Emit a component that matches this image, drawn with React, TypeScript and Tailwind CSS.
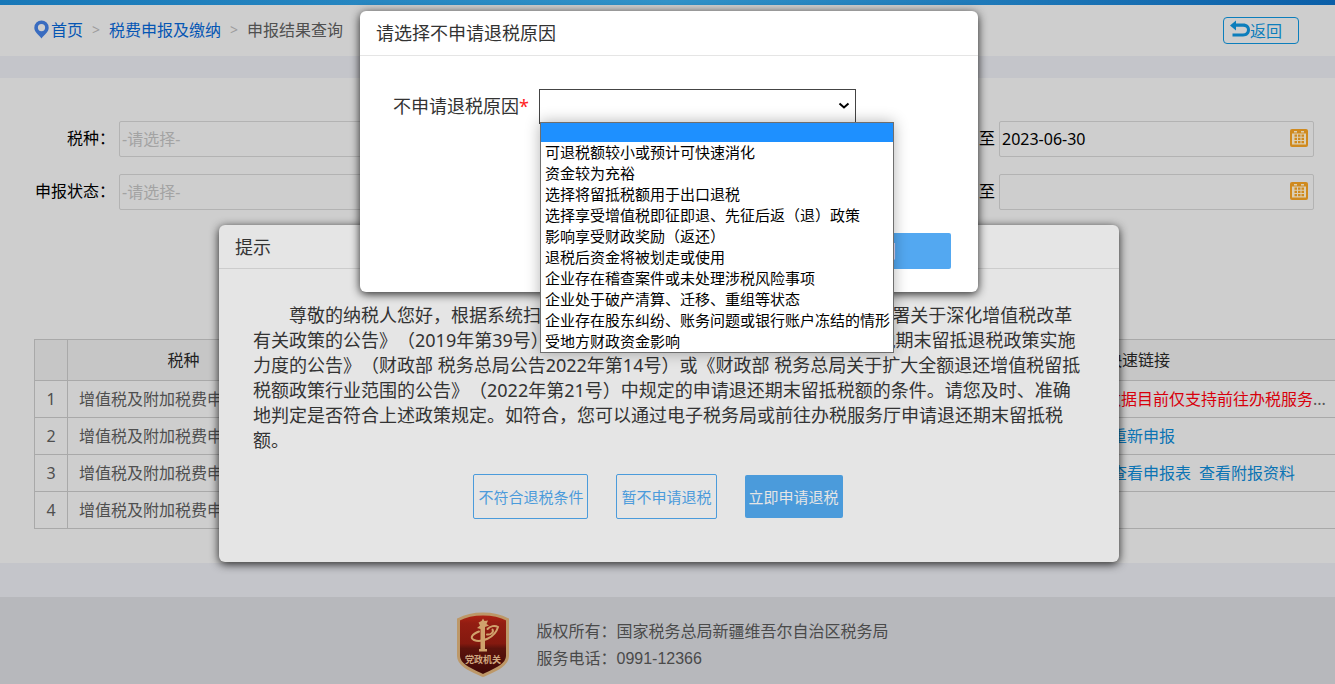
import * as React from "react"

const REASONS = [
  "可退税额较小或预计可快速消化",
  "资金较为充裕",
  "选择将留抵税额用于出口退税",
  "选择享受增值税即征即退、先征后返（退）政策",
  "影响享受财政奖励（返还）",
  "退税后资金将被划走或使用",
  "企业存在稽查案件或未处理涉税风险事项",
  "企业处于破产清算、迁移、重组等状态",
  "企业存在股东纠纷、账务问题或银行账户冻结的情形",
  "受地方财政资金影响",
]

function PinIcon() {
  return (
    <svg width="15" height="19" viewBox="0 0 15 19" aria-hidden="true">
      <path fill="#396cc0" fillRule="evenodd" d="M7.500 0.500A7.200 7.200 0 0 0 0.300 7.700C0.300 12 4.500 14.500 7.500 18.500C10.500 14.500 14.700 12 14.700 7.700A7.200 7.200 0 0 0 7.500 0.500ZM7.500 4A3.600 3.600 0 1 1 7.500 11.200A3.600 3.600 0 1 1 7.500 4Z" />
    </svg>
  )
}

function BackIcon() {
  return (
    <svg width="20" height="18" viewBox="0 0 20 18" className="mb-1" aria-hidden="true">
      <path fill="#0c7ebc" d="M0 5.500L6 0.500V3.500H13C17.500 3.500 20 6 20 9.800C20 13.800 17.500 16.500 13 16.500H2.500V13.500H13C15.600 13.500 17 12.200 17 9.800C17 7.700 15.600 6.700 13 6.700H6V10.500Z" />
    </svg>
  )
}

function CalendarIcon() {
  return (
    <svg width="18" height="18" viewBox="0 0 18 18" className="mb-[2px]" aria-hidden="true">
      <rect width="18" height="18" rx="2" fill="#d08a1e" />
      <path fill="#dccfb4" d="M4 2h3v1.500H4zM11 2h3v1.500h-3zM2 4.500h14v11H2z" />
      <path fill="#d08a1e" d="M4.500 5.500h2.500v2.300H4.500zM8 5.500h2.500v2.300H8zM11.500 5.500h2.500v2.300h-2.500zM4.500 8.800h2.500v2.300H4.500zM8 8.800h2.500v2.300H8zM11.500 8.800h2.500v2.300h-2.500zM4.500 12h2.500v2.300H4.500zM8 12h2.500v2.300H8zM11.500 12h2.500v2.300h-2.500z" />
    </svg>
  )
}

function BadgeIcon() {
  return (
    <svg width="54" height="66" viewBox="0 0 54 66" role="img" aria-label="党政机关">
      <defs>
        <linearGradient id="badge" x1="0" y1="0" x2="0" y2="1">
          <stop offset="0" stopColor="#b32414" />
          <stop offset="0.15" stopColor="#931d12" />
          <stop offset="0.48" stopColor="#84190f" />
          <stop offset="0.56" stopColor="#5c130c" />
          <stop offset="1" stopColor="#3c0806" />
        </linearGradient>
      </defs>
      <path fill="url(#badge)" stroke="#bd9868" strokeWidth="3" d="M27 2C36 2 45 4 51.500 7.500V44C51.500 53 39 58 27 63.500C15 58 2.500 53 2.500 44V7.500C9 4 18 2 27 2Z" />
      <path fill="#d0a26c" d="M25.500 9L27 6.500L28.500 9L32 8.500L30.500 12L33 13.500L29 15V37H31V39.500H23V37H24.500V17L21 16L24 13.500L22.500 10.500Z" />
      <path fill="none" stroke="#d0a26c" strokeWidth="2" strokeLinecap="round" d="M23 19.500C16 22 13.500 26 18 28C25 31 39 26 42 15C39 13 34 14 31.500 17M31 22.500C35 23 38 20 36.500 17.500" />
      <text x="27" y="51" textAnchor="middle" fontSize="9" fontWeight="700" fill="#d0a780">党政机关</text>
    </svg>
  )
}

function DateField({ id, value }: { id: string; value: string }) {
  return (
    <div className="flex items-center gap-1">
      <label htmlFor={id} className="pb-[2px]">至</label>
      <div className="flex h-9 w-[315px] items-center rounded-xs border border-[#b3b3b3] pr-[5px] pl-[2px]">
        <input id={id} defaultValue={value} className="min-w-0 flex-1 bg-transparent outline-none" />
        <button type="button" aria-label="选择日期">
          <CalendarIcon />
        </button>
      </div>
    </div>
  )
}

function FilterRow({ id, label, date }: { id: string; label: string; date: string }) {
  return (
    <div className="flex items-center justify-between">
      <div className="flex items-center">
        <label htmlFor={id} className="w-[115px] pb-[2px] text-right">
          {label}：
        </label>
        <input
          id={id}
          placeholder="-请选择-"
          className="ml-1 h-9 w-[316px] rounded-xs border border-[#b3b3b3] bg-transparent pl-[2px] outline-none placeholder:text-[#a3a3a3]"
        />
      </div>
      <DateField id={id + "-end"} value={date} />
    </div>
  )
}

function ResultTable() {
  const links = [
    <span className="text-[#d8000c]">数据目前仅支持前往办税服务<span className="text-[#555555]">...</span></span>,
    <a href="#redo" className="pl-[6px] text-[#0c74b4]">重新申报</a>,
    <span className="flex gap-2 pl-[6px] text-[#0c74b4]">
      <a href="#report">查看申报表</a>
      <a href="#attach">查看附报资料</a>
    </span>,
    null,
  ]

  return (
    <table className="w-full table-fixed border-collapse border-y border-l border-[#a9a9a9] whitespace-nowrap text-[#4f4f4f]">
      <thead className="bg-[#c6c6c6] text-[#222222]">
        <tr className="h-[41px] border-b border-[#a9a9a9]">
          <th className="w-[33px] border-r border-[#a9a9a9]" />
          <th className="w-[232px] border-r border-[#a9a9a9] font-normal">税种</th>
          <th />
          <th className="w-[236px] pl-[7px] text-left font-normal">快速链接</th>
        </tr>
      </thead>
      <tbody>
        {links.map((link, i) => (
          <tr key={i} className="h-[37px] border-b border-[#a9a9a9]">
            <td className="border-r border-[#a9a9a9] text-center">{i + 1}</td>
            <td className="overflow-hidden border-r border-[#a9a9a9] pl-[11px]">增值税及附加税费申报</td>
            <td />
            <td className="pl-[6px]">{link}</td>
          </tr>
        ))}
      </tbody>
    </table>
  )
}

function NoticeDialog() {
  return (
    <div
      role="dialog"
      aria-label="提示"
      className="absolute top-[225px] left-[219px] w-[900px] rounded-md bg-[#e5e5e5] pb-[43px] text-[#333333] shadow-[0_2px_10px_rgba(0,0,0,0.85)]"
    >
      <h2 className="flex h-11 items-center border-b border-[#cccccc] px-4 text-lg">提示</h2>
      <p className="px-[34px] pt-[34px] indent-9 text-lg leading-[25px] whitespace-nowrap">
        尊敬的纳税人您好，根据系统扫描，您可能已符合《财政部 税务总局 海关总署关于深化增值税改革
      </p>
      <p className="px-[34px] text-lg leading-[25px] whitespace-nowrap">
        有关政策的公告》（2019年第39号）、《财政部 税务总局关于进一步加大增值税期末留抵退税政策实施
        <br />
        力度的公告》（财政部 税务总局公告2022年第14号）或《财政部 税务总局关于扩大全额退还增值税留抵
        <br />
        税额政策行业范围的公告》（2022年第21号）中规定的申请退还期末留抵税额的条件。请您及时、准确
        <br />
        地判定是否符合上述政策规定。如符合，您可以通过电子税务局或前往办税服务厅申请退还期末留抵税
        <br />
        额。
      </p>
      <div className="mt-[21px] flex items-center justify-center gap-7 pr-[22px] text-[15px]">
        <button type="button" className="h-[45px] rounded-xs border border-[#4b9bdb] px-1 text-[#4b9bdb]">不符合退税条件</button>
        <button type="button" className="h-[45px] rounded-xs border border-[#4b9bdb] px-1 text-[#4b9bdb]">暂不申请退税</button>
        <button type="button" className="h-[43px] rounded-xs bg-[#4b9bdb] px-1 text-[#e5e5e5]">立即申请退税</button>
      </div>
    </div>
  )
}

function ReasonDialog() {
  return (
    <div
      role="dialog"
      aria-label="请选择不申请退税原因"
      className="absolute top-[11px] left-[360px] w-[618px] rounded-md bg-white pb-[23px] text-[#333333] shadow-[0_2px_10px_rgba(0,0,0,0.85)]"
    >
      <h2 className="flex h-[45px] items-center border-b border-[#e5e5e5] px-4 text-lg">请选择不申请退税原因</h2>
      <div className="flex items-center pt-[33px] pl-[33px]">
        <label htmlFor="reason" className="w-[146px] pb-[2px] text-lg">
          不申请退税原因<span className="text-[#ff2222]">*</span>
        </label>
        <div className="relative">
          <select id="reason" className="block h-[35px] w-[317px] appearance-none rounded-none border border-[#444444] bg-white text-[15px] text-black">
            <option value="" />
            {REASONS.map((r) => (
              <option key={r}>{r}</option>
            ))}
          </select>
          <svg width="12" height="8" viewBox="0 0 12 8" className="pointer-events-none absolute top-[13px] right-[6px]" aria-hidden="true">
            <path d="M1.500 1.500L6 5.500L10.500 1.500" fill="none" stroke="#000" strokeWidth="2" />
          </svg>
          <ul className="absolute top-[33px] left-px z-10 border border-[#6e6e6e] bg-white text-[15px] leading-[21px] whitespace-nowrap text-black shadow-[0_0_14px_rgba(0,0,0,0.3)]">
            <li className="h-[19px] bg-[#1e90ff]" />
            {REASONS.map((r) => (
              <li key={r} className="pr-[3px] pl-1">{r}</li>
            ))}
          </ul>
        </div>
      </div>
      <div className="mt-[109px] flex justify-end pr-[27px]">
        <button type="button" className="h-9 w-[146px] rounded-xs bg-[#53a8f1] text-lg text-white">关闭</button>
      </div>
    </div>
  )
}

export default function App() {
  return (
    <div className="relative flex min-h-screen flex-col overflow-hidden bg-[#c4c5ca] font-['Noto_Sans','Noto_Sans_CJK_SC',sans-serif] text-base leading-6 text-black [text-spacing-trim:space-all]">
      <div className="h-[5px] bg-linear-to-r from-[#1878b8] via-[#3192c8] to-[#0b5fa8]" />

      <header className="flex h-[51px] items-center justify-between bg-[#cecece] pr-9 pl-[34px]">
        <nav className="flex items-center gap-[9px] pb-[2px] text-[#0656b4]">
          <a href="#home" className="flex items-center gap-[2px]">
            <PinIcon />
            首页
          </a>
          <span className="text-sm text-[#9c9c9c]">&gt;</span>
          <a href="#declare">税费申报及缴纳</a>
          <span className="text-sm text-[#9c9c9c]">&gt;</span>
          <span className="text-[#505050]">申报结果查询</span>
        </nav>
        <button type="button" className="flex h-[27px] w-[76px] items-center rounded-sm border border-[#0c7ebc] pl-[6px] text-[#0c7ebc]">
          <BackIcon />
          返回
        </button>
      </header>

      <main className="mt-[22px] bg-[#cecece] pt-[43px] pb-[34px]">
        <form className="flex flex-col gap-[17px] pr-[21px]">
          <FilterRow id="tax" label="税种" date="2023-06-30" />
          <FilterRow id="status" label="申报状态" date="" />
        </form>
        <div className="mt-[129px] pl-[34px]">
          <ResultTable />
        </div>
      </main>

      <footer className="mt-[34px] flex flex-1 items-start justify-center gap-[26px] bg-[#b7b8bc] pt-[15px] pl-[10px] text-[#4a4a4a]">
        <BadgeIcon />
        <div className="pt-[6px] font-['Liberation_Sans','Noto_Sans_CJK_SC',sans-serif] leading-[27px]">
          <p>版权所有：国家税务总局新疆维吾尔自治区税务局</p>
          <p>服务电话：0991-12366</p>
        </div>
      </footer>

      <NoticeDialog />
      <ReasonDialog />
    </div>
  )
}
